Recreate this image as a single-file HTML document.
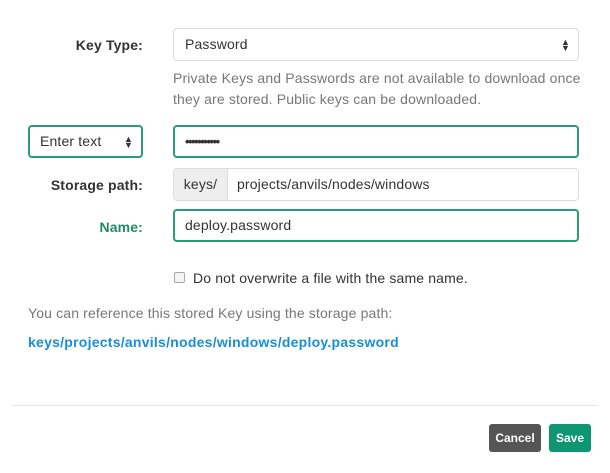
<!DOCTYPE html>
<html><head><style>
*{box-sizing:border-box;margin:0;padding:0}
body{width:610px;height:473px;background:#fff;font-family:"Liberation Sans",sans-serif;font-size:14px;letter-spacing:0.15px;color:#333;position:relative;overflow:hidden}
.a{position:absolute}
.lbl{font-weight:bold;text-align:right;width:143px;left:0}
.inp{border:1px solid #ddd;border-radius:4px;height:33px;padding:0 11px;line-height:31px;background:#fff}
.g{border:2px solid #2a9d78;line-height:29px;padding:0 10px}
.arr{position:absolute;right:8px;top:10px;font-size:9px;line-height:6px;color:#333}
</style></head><body>
<div class="a lbl" style="top:37px">Key Type:</div>
<div class="a inp" style="left:173px;top:28px;width:406px">Password<div class="arr">▲<br>▼</div></div>
<div class="a" style="left:173px;top:68px;width:415px;color:#777;line-height:21px">Private Keys and Passwords are not available to download once they are stored. Public keys can be downloaded.</div>
<div class="a inp g" style="left:28px;top:125px;width:115px">Enter text<div class="arr" style="top:9px">▲<br>▼</div></div>
<div class="a inp g" style="left:173px;top:125px;width:406px;font-size:13px;font-weight:bold;letter-spacing:-1.5px">•••••••••••</div>
<div class="a lbl" style="top:177px">Storage path:</div>
<div class="a inp" style="left:173px;top:168px;width:406px;padding:0"><span style="display:inline-block;width:54px;height:31px;background:#eee;text-align:center;border-right:1px solid #ddd;border-radius:4px 0 0 4px">keys/</span><span style="padding-left:9px">projects/anvils/nodes/windows</span></div>
<div class="a lbl" style="top:219px;color:#1f8a68">Name:</div>
<div class="a inp g" style="left:173px;top:209px;width:406px">deploy.password</div>
<div class="a" style="left:174px;top:272px;width:11px;height:11px;border:1px solid #aaa;border-radius:2px;background:#f4f4f4"></div>
<div class="a" style="left:193px;top:270px">Do not overwrite a file with the same name.</div>
<div class="a" style="left:28px;top:305px;color:#777">You can reference this stored Key using the storage path:</div>
<div class="a" style="left:28px;top:334px;color:#1a8ed6;font-weight:bold;letter-spacing:0.25px">keys/projects/anvils/nodes/windows/deploy.password</div>
<div class="a" style="left:12px;top:405px;width:586px;height:1px;background:#e5e5e5"></div>
<div class="a" style="left:489px;top:424px;width:52px;height:28px;background:#555;color:#fff;border-radius:3px;font-weight:bold;font-size:12px;letter-spacing:0;text-align:center;line-height:28px">Cancel</div>
<div class="a" style="left:549px;top:424px;width:42px;height:28px;background:#0e9673;color:#fff;border-radius:3px;font-weight:bold;font-size:12px;letter-spacing:0;text-align:center;line-height:28px">Save</div>
</body></html>
